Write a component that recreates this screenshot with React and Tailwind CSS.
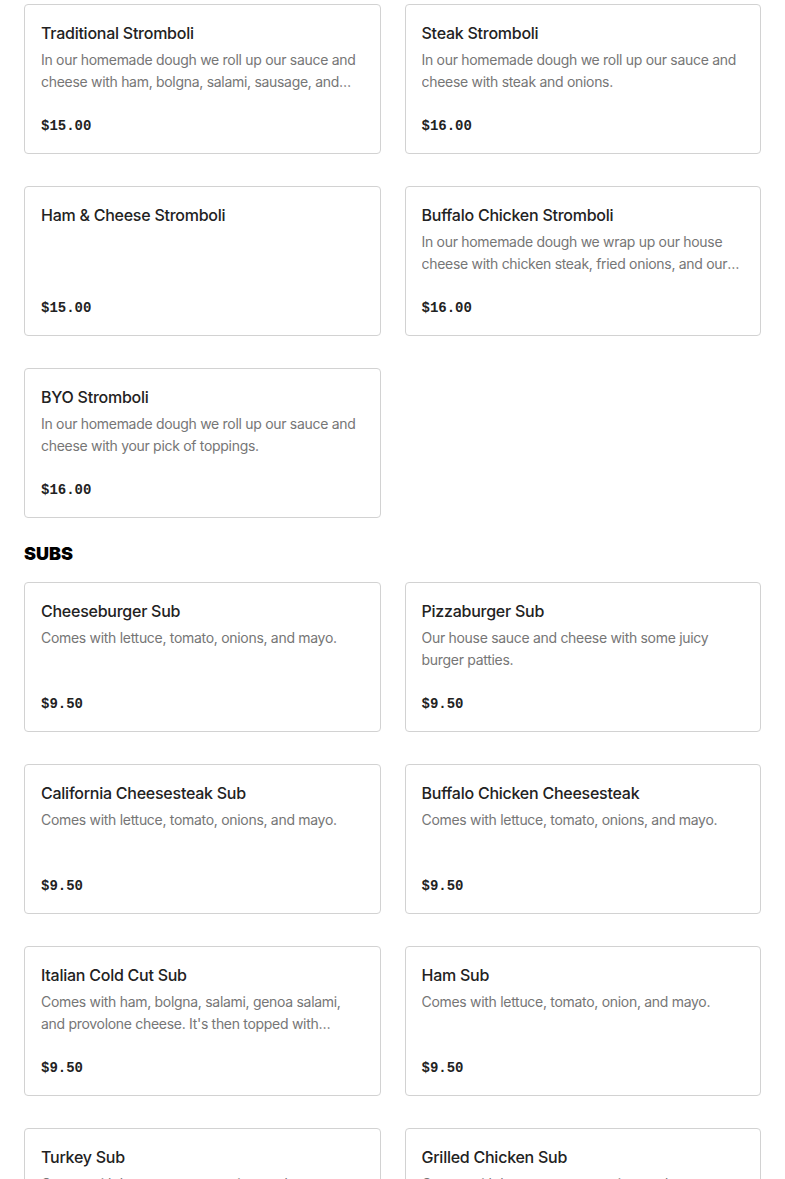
const stromboli = [
  {
    name: "Traditional Stromboli",
    desc: "In our homemade dough we roll up our sauce and cheese with ham, bolgna, salami, sausage, and pepperoni.",
    price: "$15.00",
  },
  {
    name: "Steak Stromboli",
    desc: "In our homemade dough we roll up our sauce and cheese with steak and onions.",
    price: "$16.00",
  },
  { name: "Ham & Cheese Stromboli", desc: "", price: "$15.00" },
  {
    name: "Buffalo Chicken Stromboli",
    desc: "In our homemade dough we wrap up our house cheese with chicken steak, fried onions, and our buffalo sauce.",
    price: "$16.00",
  },
  {
    name: "BYO Stromboli",
    desc: "In our homemade dough we roll up our sauce and cheese with your pick of toppings.",
    price: "$16.00",
  },
];

const subs = [
  { name: "Cheeseburger Sub", desc: "Comes with lettuce, tomato, onions, and mayo.", price: "$9.50" },
  { name: "Pizzaburger Sub", desc: "Our house sauce and cheese with some juicy burger patties.", price: "$9.50" },
  { name: "California Cheesesteak Sub", desc: "Comes with lettuce, tomato, onions, and mayo.", price: "$9.50" },
  { name: "Buffalo Chicken Cheesesteak", desc: "Comes with lettuce, tomato, onions, and mayo.", price: "$9.50" },
  {
    name: "Italian Cold Cut Sub",
    desc: "Comes with ham, bolgna, salami, genoa salami, and provolone cheese. It's then topped with lettuce, tomato, onions, and oil.",
    price: "$9.50",
  },
  { name: "Ham Sub", desc: "Comes with lettuce, tomato, onion, and mayo.", price: "$9.50" },
  { name: "Turkey Sub", desc: "Comes with lettuce, tomato, onion, and mayo.", price: "$9.50" },
  { name: "Grilled Chicken Sub", desc: "Comes with lettuce, tomato, onion, and mayo.", price: "$9.50" },
];

const ItemCard = ({ item }) => (
  <div className="h-[150px] flex flex-col border border-[#d2d2d2] rounded-[4px] bg-white px-4 pt-[16px] pb-[17px]">
    <h3 className="text-[16px] leading-[24px] font-medium tracking-[-0.25px] text-[#222]">{item.name}</h3>
    <p className="mt-[4px] text-[14px] leading-[22px] tracking-[-0.3px] text-[#767676] line-clamp-2">
      {item.desc}
    </p>
    <div className="mt-auto font-['Liberation_Mono',monospace] font-bold text-[14px] leading-[20px] text-[#222]">
      {item.price}
    </div>
  </div>
);

export default function App() {
  return (
    <div className="bg-white min-h-screen px-6 pt-1 font-['Inter',sans-serif]">
      <div className="grid grid-cols-2 gap-x-6 gap-y-8">
        {stromboli.map((item) => (
          <ItemCard key={item.name} item={item} />
        ))}
      </div>
      <h2 className="mt-[24px] mb-4 text-[18px] leading-[24px] font-black text-black">SUBS</h2>
      <div className="grid grid-cols-2 gap-x-6 gap-y-8 pb-8">
        {subs.map((item) => (
          <ItemCard key={item.name} item={item} />
        ))}
      </div>
    </div>
  );
}
